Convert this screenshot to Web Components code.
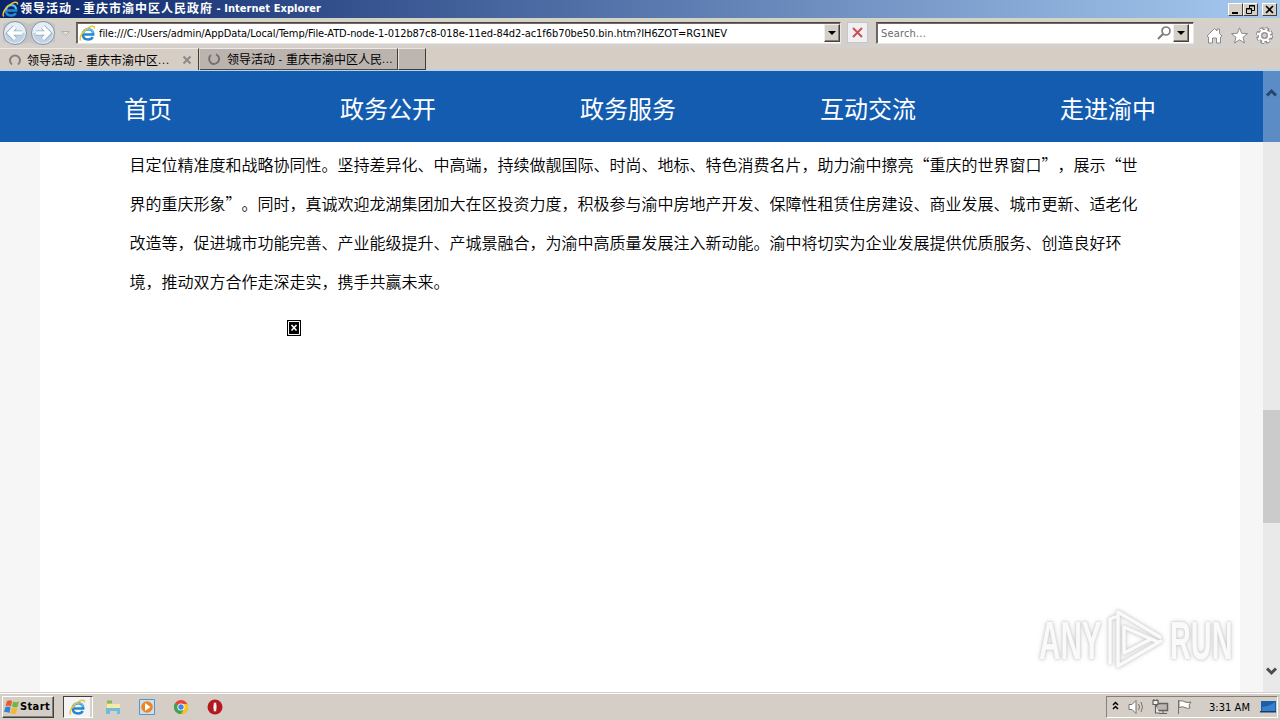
<!DOCTYPE html>
<html lang="zh-CN">
<head>
<meta charset="utf-8">
<title>领导活动 - 重庆市渝中区人民政府</title>
<style>
    html, body {
        margin: 0;
        height: 100%;
        overflow: hidden;
    }

    body {
        font: 11px/14px "DejaVu Sans Condensed", "DejaVu Sans", "Noto Sans CJK SC", sans-serif;
        color: #000;
        --face: #d4d0c8;
    }
</style>
</head>
<body>
<desktop-screen></desktop-screen>

<script>
// Spreads its text over a fixed width
class FitText extends HTMLElement {
    constructor() {
        super()
        this.attachShadow({ mode: 'open' }).innerHTML = `
            <style>
            :host { display: block; white-space: nowrap; flex: none; padding-top: 2px; }
            :host([lang]) { font-size: 12px; }
            span { display: inline-block; white-space: pre; }
            </style>
            <span><slot></slot></span>`
    }

    connectedCallback() {
        const span = this.shadowRoot.querySelector('span')
        const width = Number(this.getAttribute('width'))
        const count = this.textContent.length
        span.style.letterSpacing = `${(width - span.getBoundingClientRect().width) / count}px`
        this.style.width = `${width}px`
    }
}

class IeLogo extends HTMLElement {
    constructor() {
        super()
        this.attachShadow({ mode: 'open' }).innerHTML = `
            <style>
            :host { display: block; width: 17px; height: 17px; flex: none; }
            svg { display: block; width: 100%; height: 100%; }
            </style>
            <svg viewBox="0 0 17 17" fill="none">
                <path d="M4 9.500h10.200C14.400 6 12.300 4.200 9.300 4.200S3.800 6.300 3.800 9.500s2.200 5 5.400 5c2.200 0 3.700-.8 4.500-2.500" stroke="#2488cf" stroke-width="2.500"/>
                <path d="M4.200 8.800C4.600 5.800 6.500 4 9.300 4s4.500 1.500 4.900 4" stroke="#6cc8f3" stroke-width="1.300"/>
                <path d="M1.800 15.500C-.6 12.500 4 5.500 10 2.300c3.200-1.700 5.800-1.500 5.500 1.200" stroke="#f1c232" stroke-width="1.500"/>
            </svg>`
    }
}

class TitleBar extends HTMLElement {
    constructor() {
        super()
        this.attachShadow({ mode: 'open' }).innerHTML = `
            <style>
            :host {
                display: flex;
                align-items: center;
                height: 18px;
                box-sizing: border-box;
                padding: 0 3px 0 2px;
                background: linear-gradient(90deg, #0a246a, #a6caf0);
                color: #fff;
                font-weight: bold;
            }
            ie-logo { margin-right: 1px; }
            fit-text { padding: 0; }
            .buttons { display: flex; margin-left: auto; }
            svg {
                width: 15px;
                height: 13px;
                box-sizing: border-box;
                background: var(--face);
                border: 1px solid;
                border-color: #fff #404040 #404040 #fff;
            }
            svg:last-child { margin-left: 4px; }
            </style>
            <ie-logo></ie-logo>
            <fit-text lang="zh" width="52">领导活动</fit-text>
            <fit-text width="11"> - </fit-text>
            <fit-text lang="zh" width="130">重庆市渝中区人民政府</fit-text>
            <fit-text width="108"> - Internet Explorer</fit-text>
            <div class="buttons">
                <svg viewBox="0 0 13 11"><path d="M3 8h6v2H3z"/></svg>
                <svg viewBox="0 0 13 11" fill="none" stroke="#000"><path d="M5.500 4V1.500h5v5H8M5 2h6M2.500 4.500h5v5h-5zM2 5h6"/></svg>
                <svg viewBox="0 0 13 11" fill="none" stroke="#000" stroke-width="1.600"><path d="M3 2l7 7M10 2l-7 7"/></svg>
            </div>`
    }
}

class DropButton extends HTMLElement {
    constructor() {
        super()
        this.attachShadow({ mode: 'open' }).innerHTML = `
            <style>
            :host {
                display: flex;
                align-items: center;
                justify-content: center;
                width: 16px;
                height: 18px;
                box-sizing: border-box;
                flex: none;
                background: var(--face);
                border: 1px solid;
                border-color: #eee #404040 #404040 #eee;
                box-shadow: inset -1px -1px #858178;
            }
            </style>
            <svg width="8" height="4"><path d="M0 0h8L4 4z"/></svg>`
    }
}

class NavBar extends HTMLElement {
    constructor() {
        super()
        this.attachShadow({ mode: 'open' }).innerHTML = `
            <style>
            :host {
                display: flex;
                height: 30px;
                box-sizing: border-box;
                padding-top: 1px;
                background: linear-gradient(#d5d3c4 0, #d5d3c4 3px, #d5d0cb 4px);
            }
            svg { display: block; flex: none; }
            .field {
                display: flex;
                align-items: center;
                height: 22px;
                box-sizing: border-box;
                margin-top: 3px;
                background: #fff;
                border: 1px solid;
                border-color: #4b4442 #e9e5df #e9e5df #6b625e;
                box-shadow: inset 1px 1px #716967;
            }
            .address { width: 765px; margin-left: 4px; padding-left: 2px; }
            .address ie-logo { margin-right: 3px; }
            .address drop-button { margin-left: auto; }
            .stop {
                width: 21px;
                height: 21px;
                box-sizing: border-box;
                margin: 3px 7px 0 6px;
                border: 1px solid #c5c6cc;
                background: #f0eff2;
            }
            .search { width: 318px; margin-left: 1px; padding: 0 4px; color: #6b6b6b; }
            .search svg { margin-left: auto; margin-right: 1px; }
            .tools { display: flex; gap: 8px; margin: 8px 0 0 12px; }
            </style>
            <svg width="72" height="29" fill="none">
                <path d="M3 5q12-6 26 0 14-6 26 0v17q-12 7-26 1-14 6-26-1z" fill="#c3c2c4"/>
                <g fill="#e6eef5" stroke="#8793a3">
                    <circle cx="15" cy="14" r="11.500"/><circle cx="43" cy="14" r="11.500"/>
                </g>
                <g fill="#bfd3e4"><path d="M5 14a10 10 0 0020 0zM33 14a10 10 0 0020 0z"/></g>
                <g stroke="#8fabc2" stroke-width="5"><path d="M22 14H10m5-6l-6 6 6 6M36 14h12m-5-6l6 6-6 6"/></g>
                <g stroke="#fff" stroke-width="3.300"><path d="M22 14H10m5-6l-6 6 6 6M36 14h12m-5-6l6 6-6 6"/></g>
                <path d="M61.500 12.500h8l-4 4z" fill="#e4e1dd" stroke="#b4b0ad"/>
            </svg>
            <div class="field address">
                <ie-logo></ie-logo>
                <fit-text width="628">file:///C:/Users/admin/AppData/Local/Temp/File-ATD-node-1-012b87c8-018e-11ed-84d2-ac1f6b70be50.bin.htm?IH6ZOT=RG1NEV</fit-text>
                <drop-button></drop-button>
            </div>
            <div class="stop"><svg width="19" height="19" fill="none" stroke="#cc5054" stroke-width="2"><path d="M5 5l9 9M14 5l-9 9"/></svg></div>
            <div class="field search">
                <fit-text width="45">Search...</fit-text>
                <svg width="15" height="16" fill="none" stroke="#817d7e"><circle cx="9" cy="6" r="4" stroke-width="1.700"/><path d="M6 9l-5 5" stroke-width="2.200"/></svg>
                <drop-button></drop-button>
            </div>
            <div class="tools">
                <svg width="17" height="18" fill="#fff" stroke="#8d898b"><path d="M1 9l7.500-7.500 2.500 2.500V2h2.500v4.500L16 9l-1.500 1V16h-4v-5h-4v5h-4v-6z"/></svg>
                <svg width="17" height="18" fill="#fff" stroke="#8d898b"><path d="M8.500.8l2.200 5.500 5.800.3-4.500 3.700 1.500 5.700-5-3.200-5 3.200L5 10.300.5 6.600l5.800-.3z"/></svg>
                <svg width="17" height="18" fill="none">
                    <circle cx="8.500" cy="8.500" r="6.500" stroke="#858184" stroke-width="4" stroke-dasharray="3.300 1.805"/>
                    <circle cx="8.500" cy="8.500" r="5" stroke="#858184" stroke-width="3.500"/>
                    <circle cx="8.500" cy="8.500" r="6.300" stroke="#fff" stroke-width="2.600" stroke-dasharray="2.200 2.748"/>
                    <circle cx="8.500" cy="8.500" r="4.700" stroke="#fff" stroke-width="2.200"/>
                    <circle cx="8.500" cy="8.500" r="2.700" fill="#d5d0cb" stroke="#858184"/>
                </svg>
            </div>`
    }
}

class TabStrip extends HTMLElement {
    constructor() {
        super()
        this.attachShadow({ mode: 'open' }).innerHTML = `
            <style>
            :host {
                display: flex;
                height: 23px;
                box-sizing: border-box;
                background: #d6cec5;
                border-bottom: 2px solid #b9d2e4;
            }
            .tab {
                display: flex;
                align-items: center;
                width: 199px;
                height: 22px;
                box-sizing: border-box;
                padding: 0 6px 0 8px;
                border-right: 1px solid #3f3b3b;
                border-top: 1px solid #eee9e4;
            }
            .tab svg:first-child { margin-right: 5px; }
            .tab svg:last-child { margin-left: auto; }
            .back {
                margin-left: 1px;
                padding: 0 4px 0 7px;
                width: 198px;
                background: #bab3ae;
                border-bottom: 1px solid #4d4948;
            }
            .back svg:first-child { margin-right: 6px; }
            .new {
                width: 28px;
                height: 22px;
                box-sizing: border-box;
                background: #bdb6b0;
                border: 1px solid;
                border-color: #e9e4df #3f3b3b #3f3b3b #e9e4df;
            }
            </style>
            <div class="tab">
                <svg width="14" height="14" fill="none" stroke="#858180" stroke-width="2"><path d="M4 11.500A5 5 0 1110 11.500"/></svg>
                <fit-text lang="zh" width="48">领导活动</fit-text>
                <fit-text width="11"> - </fit-text>
                <fit-text lang="zh" width="72">重庆市渝中区</fit-text>
                <fit-text width="12">...</fit-text>
                <svg width="10" height="10" fill="none" stroke="#8d8989" stroke-width="2"><path d="M1.500 1.500l7 7M8.500 1.500l-7 7"/></svg>
            </div>
            <div class="tab back">
                <svg width="14" height="14" fill="none" stroke="#767272" stroke-width="2"><path d="M4 3A5 5 0 109 2.300"/></svg>
                <fit-text lang="zh" width="48">领导活动</fit-text>
                <fit-text width="11"> - </fit-text>
                <fit-text lang="zh" width="96">重庆市渝中区人民</fit-text>
                <fit-text width="11">...</fit-text>
            </div>
            <div class="new"></div>`
    }
}

class SiteMenu extends HTMLElement {
    constructor() {
        super()
        this.attachShadow({ mode: 'open' }).innerHTML = `
            <style>
            :host {
                display: grid;
                grid-template-columns: repeat(5, 240px);
                align-items: center;
                justify-items: center;
                height: 71px;
                box-sizing: border-box;
                padding: 3px 0 0 28px;
                background: #135cb0;
                color: #fff;
                font: 24px/36px "Noto Sans CJK SC", sans-serif;
            }
            </style>
            <slot></slot>`
    }
}

class ArticleBody extends HTMLElement {
    constructor() {
        super()
        this.attachShadow({ mode: 'open' }).innerHTML = `
            <style>
            :host {
                display: block;
                flex: 1;
                width: 1200px;
                box-sizing: border-box;
                margin-left: 40px;
                padding: 3px 90px 0 89.5px;
                background: #fff;
                font: 350 16px/39px "Noto Sans CJK SC", sans-serif;
                text-spacing-trim: space-all;
            }
            p { margin: 0; white-space: nowrap; }
            svg { display: block; margin: 19px 0 0 157.500px; }
            </style>
            <p>目定位精准度和战略协同性。坚持差异化、中高端，持续做靓国际、时尚、地标、特色消费名片，助力渝中擦亮“重庆的世界窗口”，展示“世<br>界的重庆形象”。同时，真诚欢迎龙湖集团加大在区投资力度，积极参与渝中房地产开发、保障性租赁住房建设、商业发展、城市更新、适老化<br>改造等，促进城市功能完善、产业能级提升、产城景融合，为渝中高质量发展注入新动能。渝中将切实为企业发展提供优质服务、创造良好环<br>境，推动双方合作走深走实，携手共赢未来。</p>
            <svg width="14" height="16"><path d="M0 0h14v16H0z"/><path d="M1.500 1.500h11v13h-11z" fill="none" stroke="#fff"/><path d="M4.500 5l5 5.500M9.500 5l-5 5.500" stroke="#fff" stroke-width="1.600"/></svg>`
    }
}

class ScrollBar extends HTMLElement {
    constructor() {
        super()
        this.attachShadow({ mode: 'open' }).innerHTML = `
            <style>
            :host {
                display: flex;
                flex-direction: column;
                width: 17px;
                flex: none;
                background: linear-gradient(#5b8cc6 71px, #e9e9e9 71px);
            }
            .thumb { height: 113px; margin-top: 305px; background: #cbcbcb; }
            svg { display: block; }
            svg:first-of-type { margin-top: 17px; }
            svg:last-of-type { margin: auto 0 15px; }
            </style>
            <svg width="17" height="17" fill="none" stroke="#24466f" stroke-width="3"><path d="M4 7.500L8.500 3 13 7.500"/></svg>
            <div class="thumb"></div>
            <svg width="17" height="11" fill="none" stroke="#4c4c4c" stroke-width="3"><path d="M4 2.500L8.500 7 13 2.500"/></svg>`
    }
}

class AnyrunMark extends HTMLElement {
    constructor() {
        super()
        this.attachShadow({ mode: 'open' }).innerHTML = `
            <style>
            :host {
                position: absolute;
                left: 1039px;
                top: 538px;
                display: flex;
                align-items: center;
                color: #fafafa;
                font: bold 53px/62px "Liberation Sans", sans-serif;
                filter: drop-shadow(0 0 1px #ccc) drop-shadow(0 0 2px #d4d4d4);
            }
            span { width: 62px; transform-origin: 0 50%; transform: translateY(1px) scaleX(.56); }
            span:last-child { transform: translateY(1px) scaleX(.545); }
            svg { margin: 0 4px 0 5px; flex: none; }
            </style>
            <span>ANY</span>
            <svg width="60" height="62" fill="none" stroke="#fafafa" stroke-width="3.500" stroke-linejoin="round" stroke-linecap="round">
                <path d="M4 54V10l5-2M12 48V3l42 25M12 48v9l43-25M18 18v26l27-14zM18 18l34 15"/>
            </svg>
            <span>RUN</span>`
    }
}

class TaskBar extends HTMLElement {
    constructor() {
        super()
        this.attachShadow({ mode: 'open' }).innerHTML = `
            <style>
            :host {
                display: flex;
                align-items: flex-start;
                height: 28px;
                box-sizing: border-box;
                padding-top: 3px;
                background: linear-gradient(#d4d0c8 1px, #fff 1px, #fff 2px, #d4cec7 2px);
            }
            svg { display: block; flex: none; }
            .start {
                display: flex;
                align-items: center;
                width: 52px;
                height: 22px;
                box-sizing: border-box;
                margin: 1px 0 0 2px;
                padding-left: 1px;
                border: 1px solid;
                border-color: #fff #404040 #404040 #fff;
                box-shadow: inset -1px -1px #858178;
                font-weight: bold;
            }
            .start fit-text { padding: 0; }
            .active {
                display: flex;
                width: 30px;
                height: 22px;
                box-sizing: border-box;
                margin: 1px 0 0 9px;
                padding: 2px 5px;
                background: #f5f4f4;
                border: 1px solid;
                border-color: #404040 #fff #fff #404040;
                box-shadow: inset -2px 0 #d4d0c8;
            }
            .quick { display: flex; gap: 18px; margin: 4px 0 0 12px; }
            .tray {
                display: flex;
                align-items: center;
                width: 172px;
                height: 22px;
                box-sizing: border-box;
                margin: 1px 2px 0 auto;
                padding-left: 4px;
                border: 1px solid;
                border-color: #858178 #fff #fff #858178;
            }
            .tray fit-text { margin-left: 16px; }
            .desk { margin-left: auto; }
            </style>
            <div class="start">
                <svg width="16" height="16">
                    <path d="M3 2q3-1.500 5 0L7 7.500Q4.500 6 1.500 7z" fill="#e85a2b"/>
                    <path d="M9 2.500q3 1.500 6 0L13.500 8Q11 9 8 7.500z" fill="#72b740"/>
                    <path d="M1.500 8q3-1 5 .5L5.500 14Q3 12.500 0 13z" fill="#3980cf"/>
                    <path d="M8 8.700q2.500 1.500 5.500.3L12 14.500Q9 15.500 6.500 14z" fill="#f4b82d"/>
                </svg>
                <fit-text width="30">Start</fit-text>
            </div>
            <div class="active"><ie-logo></ie-logo></div>
            <div class="quick">
                <svg width="16" height="16">
                    <path d="M1 3h5l1 2h7v7H1z" fill="#e9d17b"/><path d="M2 1.500h5v3H2z" fill="#82b76b"/>
                    <path d="M2 5h13v4H2z" fill="#f7e9a8"/><path d="M1 9h14v6h-3v-3H5v3H1z" fill="#70bcdc"/>
                </svg>
                <svg width="16" height="16"><path d="M.5.500h15v15H.5z" fill="#c9e2f2" stroke="#5b94c4"/><circle cx="8" cy="8" r="5.800" fill="#ee8423"/><path d="M6 4l5.500 4L6 12z" fill="#fff"/></svg>
                <svg width="16" height="16">
                    <circle cx="8" cy="8" r="7" fill="#e84335"/><path d="M8 8L1.900 4.500A7 7 0 008 15l3-5z" fill="#37a853"/>
                    <path d="M8 15a7 7 0 006.500-10H8l3 5z" fill="#fbc51b"/><circle cx="8" cy="8" r="3.600" fill="#fff"/><circle cx="8" cy="8" r="2.700" fill="#4384e8"/>
                </svg>
                <svg width="16" height="16"><circle cx="8" cy="8" r="7.500" fill="#b91720"/><ellipse cx="8" cy="8" rx="2" ry="5" fill="#f6eded" stroke="#7c1015" stroke-width=".6"/></svg>
            </div>
            <div class="tray">
                <svg width="10" height="14" fill="none" stroke="#000" stroke-width="1.500"><path d="M2 5l2.500-2.500L7 5M2 9l2.500-2.500L7 9"/></svg>
                <svg width="18" height="16" style="margin-left:7px" fill="#fff" stroke="#77736f"><path d="M1 5.500h3L8 1.500v13L4 10.500H1z"/><path d="M10.500 5q2 3 0 6M13 3q3 5 0 10" fill="none"/></svg>
                <svg width="17" height="16" style="margin-left:6px" fill="#eee" stroke="#65615e"><path d="M4.500 4.500h11v7h-11z" fill="#b9b6b3" stroke-width="1.500"/><path d="M7 14.500h8M11 12v2"/><path d="M1 1.500h5v4H1zM2 0v2M5 0v2M3.500 6v8h4" stroke-width="1.200"/></svg>
                <svg width="17" height="16" style="margin-left:7px" fill="#fff" stroke="#77736f"><path d="M2.500 15V1M3 2q4-1 6 1 3 1 6 0l-2 3 1 3q-3 1-5-.5Q7 7 3 8.500z"/></svg>
                <fit-text width="41">3:31 AM</fit-text>
                <svg class="desk" width="17" height="16"><path d="M1 2h15v11H1z" fill="#1c5da9"/><path d="M2 8Q8 8 15 3v9H2z" fill="#397fca"/><path d="M0 12h16v1.500H0z" fill="#163c70"/></svg>
            </div>`
    }
}

class DesktopScreen extends HTMLElement {
    constructor() {
        super()
        this.attachShadow({ mode: 'open' }).innerHTML = `
            <style>
            :host {
                display: flex;
                flex-direction: column;
                width: 1280px;
                height: 720px;
                background: var(--face);
            }
            .view { position: relative; display: flex; flex: 1; min-height: 0; }
            .page { display: flex; flex-direction: column; width: 1263px; background: #f6f6f6; }
            </style>
            <title-bar></title-bar>
            <nav-bar></nav-bar>
            <tab-strip></tab-strip>
            <div class="view">
                <div class="page">
                    <site-menu><a>首页</a><a>政务公开</a><a>政务服务</a><a>互动交流</a><a>走进渝中</a></site-menu>
                    <article-body></article-body>
                </div>
                <scroll-bar></scroll-bar>
                <anyrun-mark></anyrun-mark>
            </div>
            <task-bar></task-bar>`
    }
}

customElements.define('fit-text', FitText)
customElements.define('ie-logo', IeLogo)
customElements.define('title-bar', TitleBar)
customElements.define('drop-button', DropButton)
customElements.define('nav-bar', NavBar)
customElements.define('tab-strip', TabStrip)
customElements.define('site-menu', SiteMenu)
customElements.define('article-body', ArticleBody)
customElements.define('scroll-bar', ScrollBar)
customElements.define('anyrun-mark', AnyrunMark)
customElements.define('task-bar', TaskBar)
customElements.define('desktop-screen', DesktopScreen)
</script>
</body>
</html>
